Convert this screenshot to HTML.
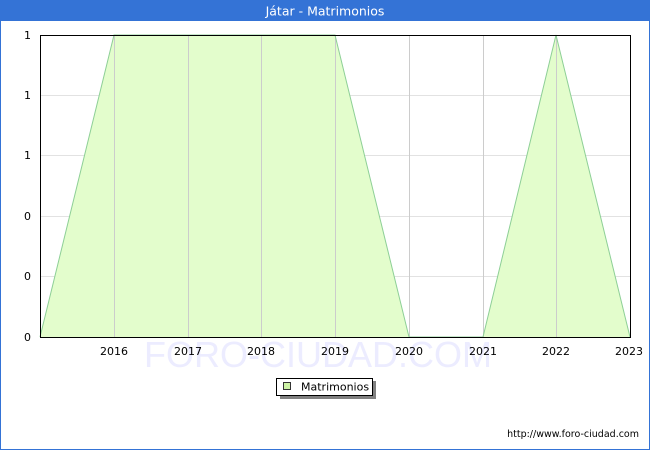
<!DOCTYPE html>
<html><head><meta charset="utf-8"><style>
html,body{margin:0;padding:0;background:#fff;}
svg{display:block;font-family:"DejaVu Sans","Liberation Sans",sans-serif;}
</style></head><body>
<svg width="650" height="450" viewBox="0 0 650 450" xmlns="http://www.w3.org/2000/svg">
<rect x="0" y="0" width="650" height="450" fill="#fff"/>
<rect x="0.5" y="0.5" width="649" height="449" fill="none" stroke="#3473d6" stroke-width="1"/>
<rect x="0" y="0" width="650" height="21" fill="#3473d6"/>
<text x="325" y="15.5" fill="#fff" font-size="12.5" text-anchor="middle">Játar - Matrimonios</text>
<text x="318" y="367" fill="#ececff" font-size="36" text-anchor="middle" font-family="Liberation Sans, sans-serif">FORO-CIUDAD.COM</text>
<g stroke="#e2e2e2" stroke-width="1">
<line x1="40" y1="95.5" x2="630" y2="95.5"/>
<line x1="40" y1="155.5" x2="630" y2="155.5"/>
<line x1="40" y1="216.5" x2="630" y2="216.5"/>
<line x1="40" y1="276.5" x2="630" y2="276.5"/>
</g>
<polygon points="40,337 114,35 335,35 409,337" fill="#e3fdcc"/>
<polygon points="483,337 556,35 630,337" fill="#e3fdcc"/>
<g stroke="#cccccc" stroke-width="1">
<line x1="114.5" y1="35" x2="114.5" y2="337"/>
<line x1="188.5" y1="35" x2="188.5" y2="337"/>
<line x1="261.5" y1="35" x2="261.5" y2="337"/>
<line x1="335.5" y1="35" x2="335.5" y2="337"/>
<line x1="409.5" y1="35" x2="409.5" y2="337"/>
<line x1="483.5" y1="35" x2="483.5" y2="337"/>
<line x1="556.5" y1="35" x2="556.5" y2="337"/>
</g>
<polyline points="40,337 114,35 335,35 409,337 483,337 556,35 630,337" fill="none" stroke="#8dcf96" stroke-width="1"/>
<rect x="40.5" y="35.5" width="590" height="302" fill="none" stroke="#000" stroke-width="1"/>
<g font-size="11" fill="#000" text-anchor="end">
<text x="31" y="39">1</text>
<text x="31" y="99">1</text>
<text x="31" y="159">1</text>
<text x="31" y="220">0</text>
<text x="31" y="280">0</text>
<text x="31" y="341">0</text>
</g>
<g font-size="11" fill="#000" text-anchor="middle">
<text x="114" y="355">2016</text>
<text x="188" y="355">2017</text>
<text x="261" y="355">2018</text>
<text x="335" y="355">2019</text>
<text x="409" y="355">2020</text>
<text x="483" y="355">2021</text>
<text x="556" y="355">2022</text>
<text x="629" y="355">2023</text>
</g>
<rect x="280" y="381" width="96" height="18" fill="#808080"/>
<rect x="276.5" y="378.5" width="96" height="17" fill="#fff" stroke="#000" stroke-width="1"/>
<rect x="283.5" y="382.5" width="7" height="7" fill="#cdf3a5" stroke="#333" stroke-width="1"/>
<text x="301" y="390.5" font-size="11" fill="#000">Matrimonios</text>
<text x="639" y="437" font-size="9.5" fill="#000" text-anchor="end">http://www.foro-ciudad.com</text>
</svg>
</body></html>
